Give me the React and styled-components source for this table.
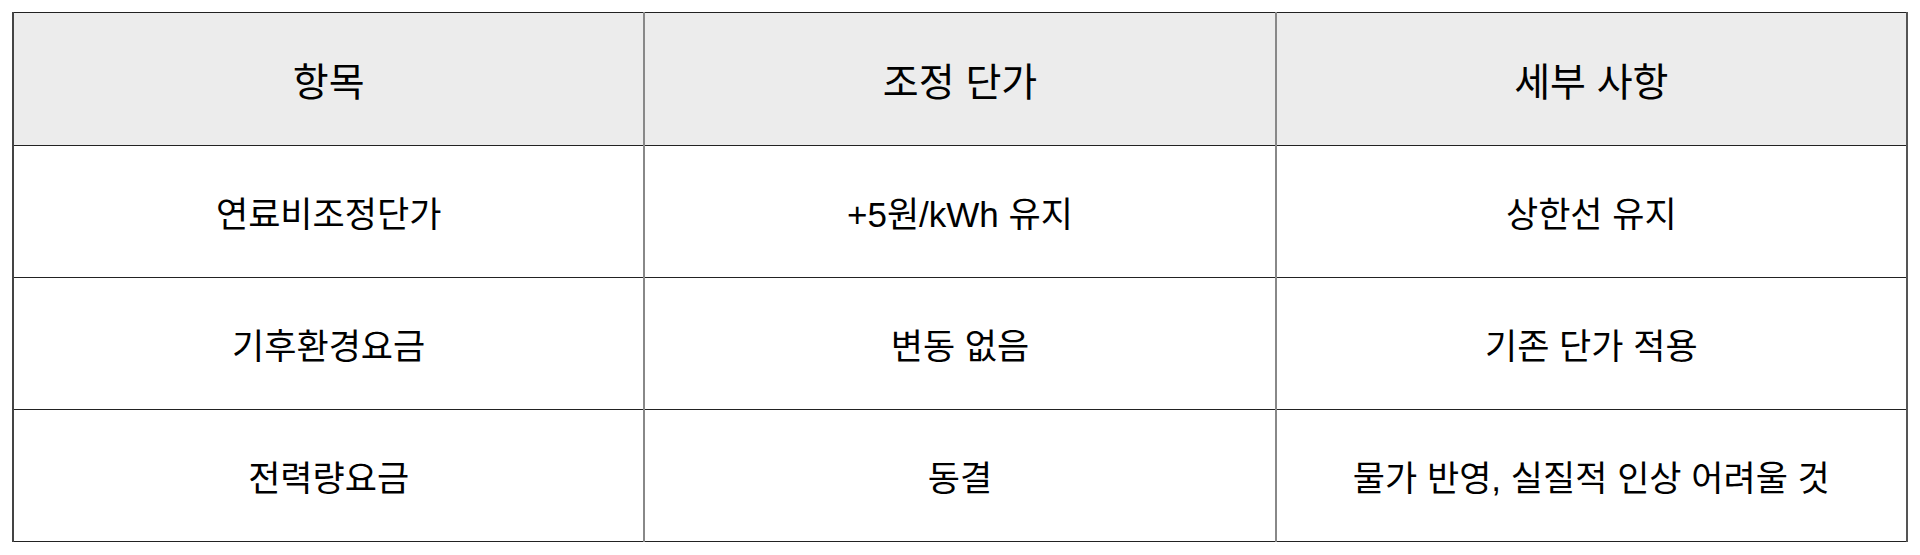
import styled, { createGlobalStyle } from "styled-components";

const GlobalStyle = createGlobalStyle`
  html, body {
    margin: 0;
    padding: 0;
    background: #fff;
  }
  body {
    font-family: "Liberation Sans", "Noto Sans CJK KR", sans-serif;
    color: #000;
  }
`;

const rows = [
  ["연료비조정단가", "+5원/kWh 유지", "상한선 유지"],
  ["기후환경요금", "변동 없음", "기존 단가 적용"],
  ["전력량요금", "동결", "물가 반영, 실질적 인상 어려울 것"],
];

const App = () => {
  return (
    <Page>
      <GlobalStyle />
      <Table>
        <thead>
          <tr>
            <HeadCell>항목</HeadCell>
            <HeadCell>조정 단가</HeadCell>
            <HeadCell>세부 사항</HeadCell>
          </tr>
        </thead>
        <tbody>
          {rows.map((row) => (
            <tr key={row[0]}>
              {row.map((text, i) => (
                <Cell key={i}>{text}</Cell>
              ))}
            </tr>
          ))}
        </tbody>
      </Table>
    </Page>
  );
};

export default App;

const Page = styled.div`
  padding: 12px;
`;

const Table = styled.table`
  width: 100%;
  border-collapse: collapse;
  table-layout: fixed;
  border-left: 2px solid #444;
  border-right: 2px solid #555;
  border-top: 1px solid #222;
  border-bottom: 1px solid #222;
`;

const HeadCell = styled.th`
  height: 132px;
  padding: 0;
  background-color: #ececec;
  font-size: 39px;
  font-weight: 400;
  text-align: center;
  vertical-align: middle;
  border-bottom: 1px solid #222;
  & + & {
    border-left: 2px solid #888;
  }
`;

const Cell = styled.td`
  height: 131px;
  padding: 0;
  font-size: 35px;
  font-weight: 400;
  text-align: center;
  vertical-align: middle;
  border-bottom: 1px solid #222;
  & + & {
    border-left: 2px solid #888;
  }
`;
